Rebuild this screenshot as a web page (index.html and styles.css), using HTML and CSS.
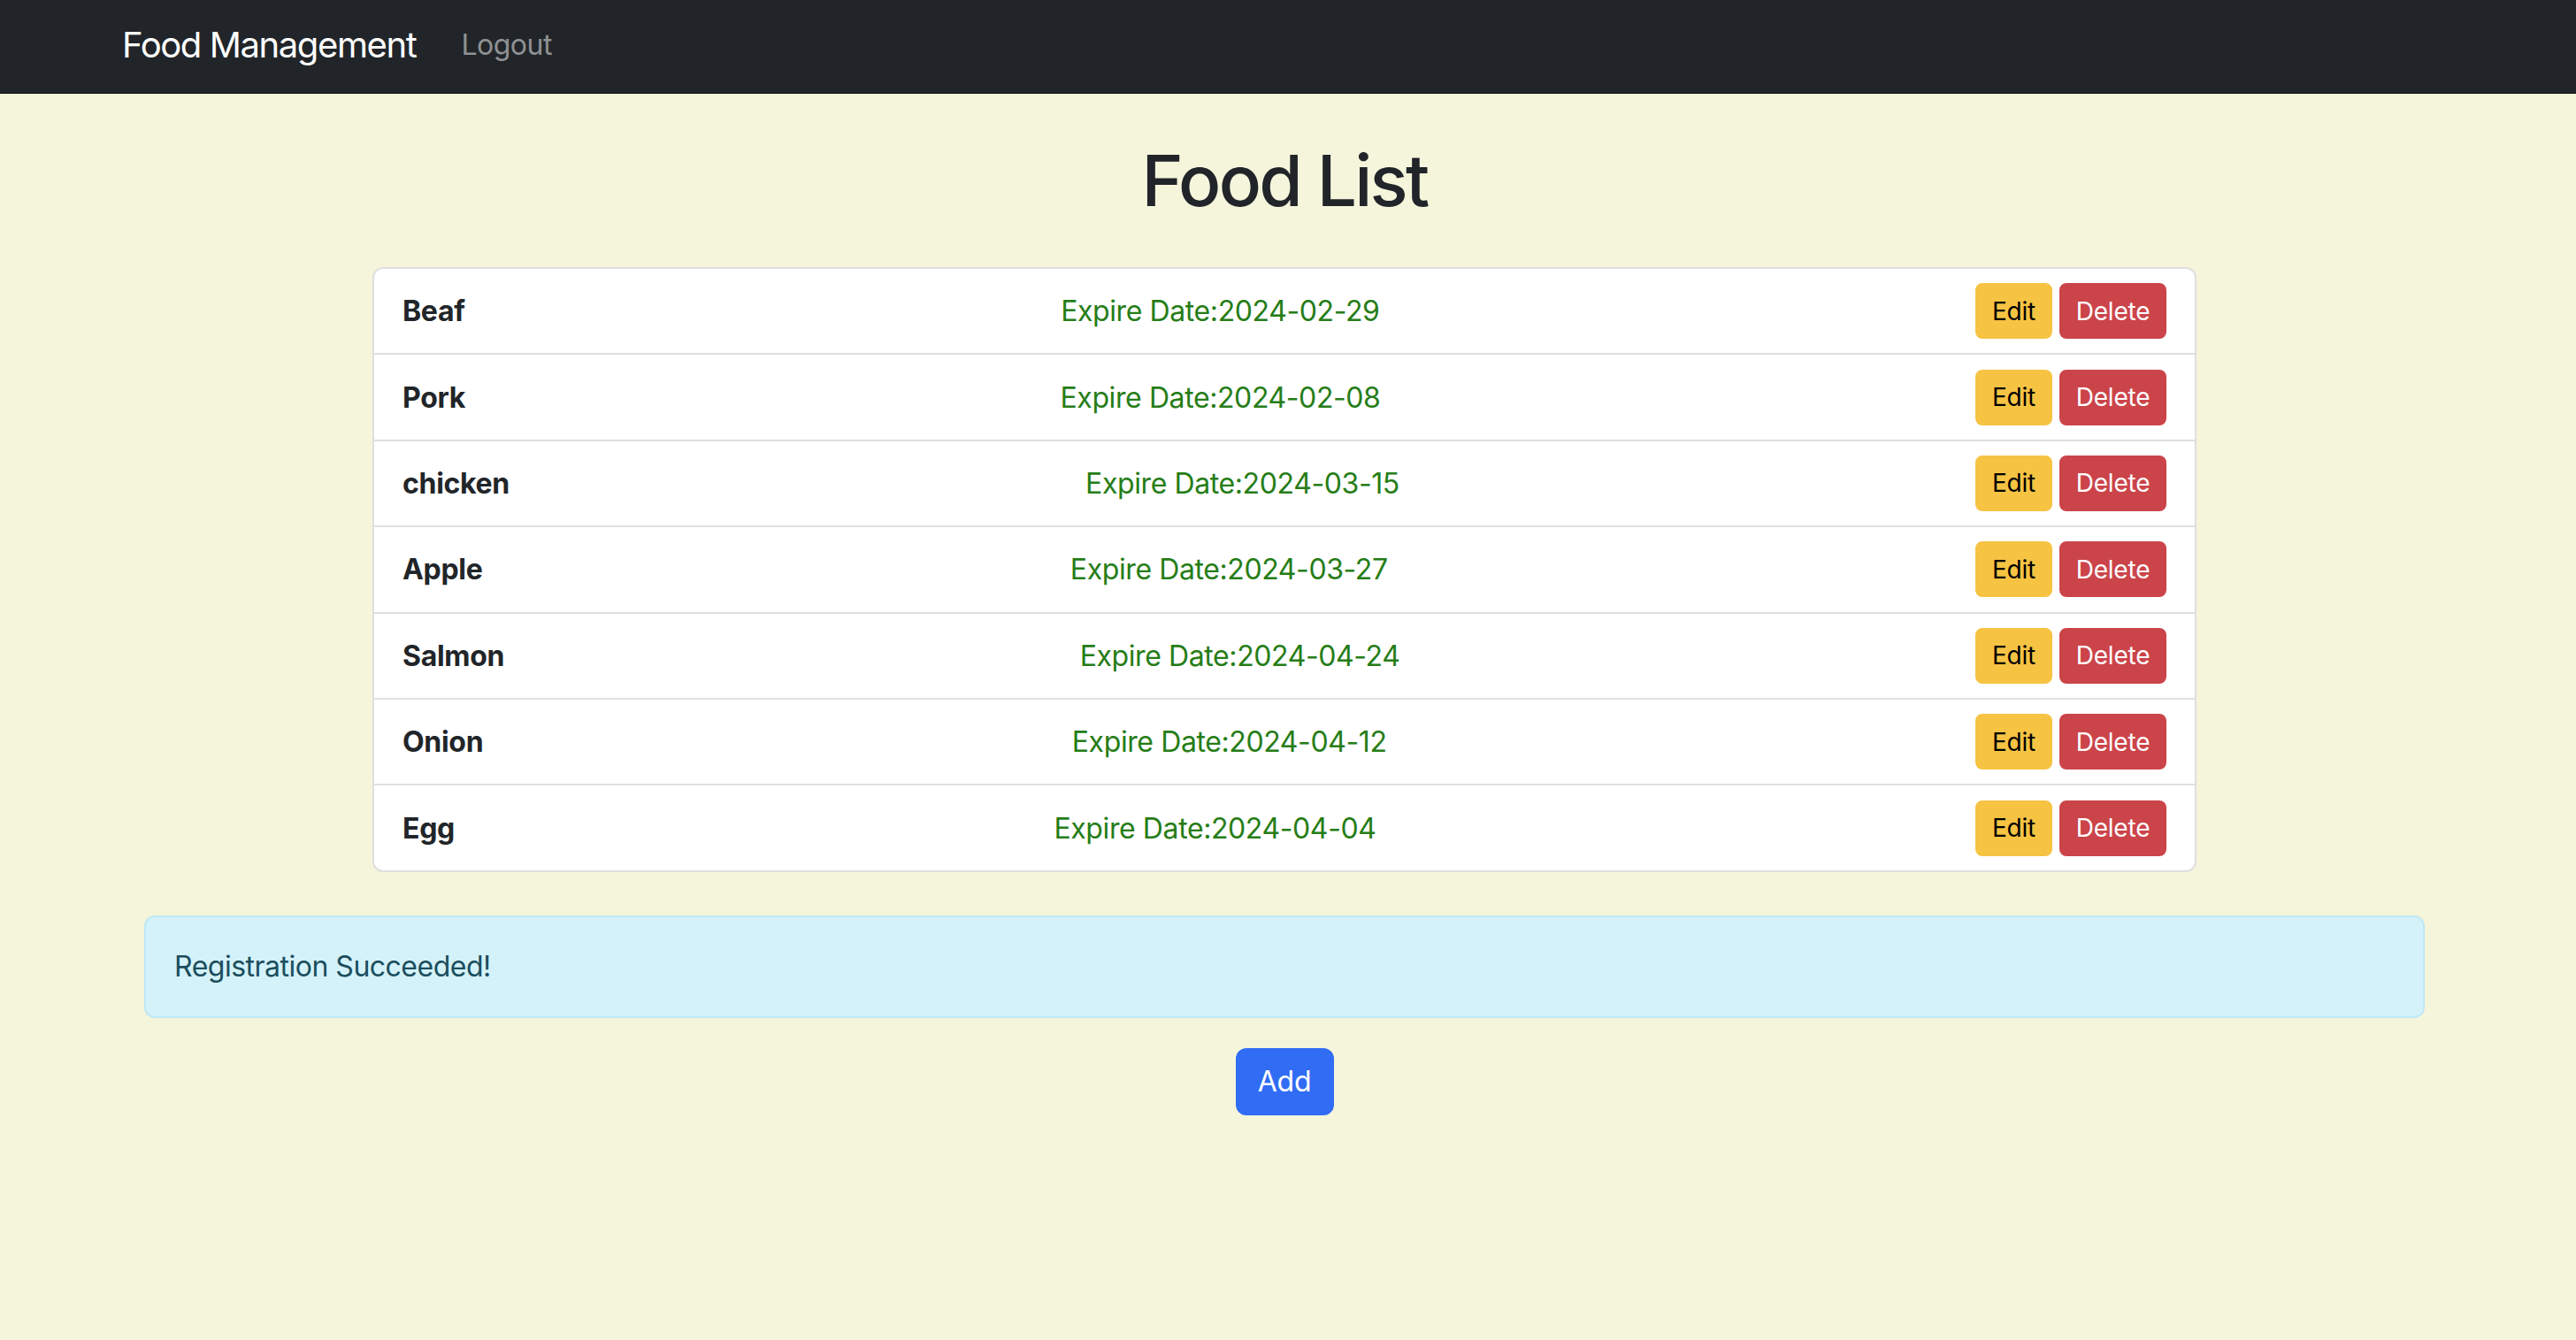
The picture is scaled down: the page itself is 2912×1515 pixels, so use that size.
FILE: index.html
```html
<!DOCTYPE html>
<html lang="en">
<head>
<meta charset="utf-8">
<title>Food Management</title>
<link rel="stylesheet" href="styles.css">
</head>
<body>
<nav class="navbar">
  <a class="brand" href="#">Food Management</a>
  <a class="nav-link" href="#">Logout</a>
</nav>
<main class="main">
  <h1 class="title">Food List</h1>
  <ul class="food-list">
    <li class="food-item"><span class="food-name">Beaf</span><span class="food-date">Expire Date:2024-02-29</span><span class="actions"><button class="btn btn-edit">Edit</button><button class="btn btn-delete">Delete</button></span></li>
    <li class="food-item"><span class="food-name">Pork</span><span class="food-date">Expire Date:2024-02-08</span><span class="actions"><button class="btn btn-edit">Edit</button><button class="btn btn-delete">Delete</button></span></li>
    <li class="food-item"><span class="food-name">chicken</span><span class="food-date">Expire Date:2024-03-15</span><span class="actions"><button class="btn btn-edit">Edit</button><button class="btn btn-delete">Delete</button></span></li>
    <li class="food-item"><span class="food-name">Apple</span><span class="food-date">Expire Date:2024-03-27</span><span class="actions"><button class="btn btn-edit">Edit</button><button class="btn btn-delete">Delete</button></span></li>
    <li class="food-item"><span class="food-name">Salmon</span><span class="food-date">Expire Date:2024-04-24</span><span class="actions"><button class="btn btn-edit">Edit</button><button class="btn btn-delete">Delete</button></span></li>
    <li class="food-item"><span class="food-name">Onion</span><span class="food-date">Expire Date:2024-04-12</span><span class="actions"><button class="btn btn-edit">Edit</button><button class="btn btn-delete">Delete</button></span></li>
    <li class="food-item"><span class="food-name">Egg</span><span class="food-date">Expire Date:2024-04-04</span><span class="actions"><button class="btn btn-edit">Edit</button><button class="btn btn-delete">Delete</button></span></li>
  </ul>
  <div class="alert">Registration Succeeded!</div>
  <div class="add-row"><button class="btn-add">Add</button></div>
</main>
</body>
</html>
```

FILE: styles.css
```css
* { box-sizing: border-box; }
html, body { margin: 0; padding: 0; }
body {
  background: #f5f5dc;
  font-family: Inter, "Noto Sans", sans-serif;
  color: #212529;
  min-height: 1515px;
}
.navbar {
  height: 106px;
  background: #212529;
  border-bottom: 1px solid #0e1012;
  display: flex;
  align-items: center;
  padding: 0 0 5px 138px;
}
.brand {
  color: #fff;
  text-decoration: none;
  font-size: 40px;
  letter-spacing: -1.4px;
  margin-right: 51px;
}
.nav-link {
  color: #8f9193;
  text-decoration: none;
  font-size: 32px;
  letter-spacing: -0.5px;
}
.main {
  width: 2904px;
  display: flex;
  flex-direction: column;
  align-items: center;
}
.title {
  margin: 50px 0 50px;
  font-size: 80px;
  font-weight: 500;
  line-height: 96px;
  letter-spacing: -2.7px;
  color: #212529;
}
.food-list {
  list-style: none;
  margin: 0;
  padding: 0;
  width: 2062px;
  background: #fff;
  border: 2px solid #dfdfdf;
  border-radius: 12px;
}
.food-item {
  display: flex;
  justify-content: space-between;
  align-items: center;
  padding: 16px 32px 16px;
  border-bottom: 2px solid #dfdfdf;
  height: 97.4px;
}
.food-item:last-child { border-bottom: none; height: 95.4px; }
.food-name {
  font-size: 32px;
  font-weight: 700;
  letter-spacing: -0.3px;
}
.food-date {
  font-size: 32px;
  color: #267d17;
  letter-spacing: -0.4px;
}
.actions {
  display: flex;
  gap: 8px;
}
.btn {
  font-family: inherit;
  font-size: 28px;
  line-height: 42px;
  height: 63px;
  padding: 0;
  border-radius: 8px;
  border: 2px solid transparent;
  letter-spacing: -0.2px;
  text-align: center;
}
.btn-edit {
  width: 87px;
  background: #f6c343;
  border-color: #f6c343;
  color: #000;
}
.btn-delete {
  width: 121px;
  background: #cb444a;
  border-color: #cb444a;
  color: #fff;
}
.alert {
  margin-top: 49px;
  width: 2578px;
  height: 116px;
  background: #d4f2fa;
  border: 2px solid #bfe8f6;
  border-radius: 12px;
  color: #1b4e5d;
  font-size: 32px;
  line-height: 48px;
  padding: 32px 32px;
  letter-spacing: -0.5px;
}
.add-row {
  margin-top: 34px;
  display: flex;
  justify-content: center;
}
.btn-add {
  font-family: inherit;
  font-size: 32px;
  line-height: 48px;
  height: 76px;
  width: 111px;
  padding: 0;
  background: #316cf4;
  border: 2px solid #316cf4;
  border-radius: 12px;
  color: #fff;
  letter-spacing: -0.3px;
}
```
